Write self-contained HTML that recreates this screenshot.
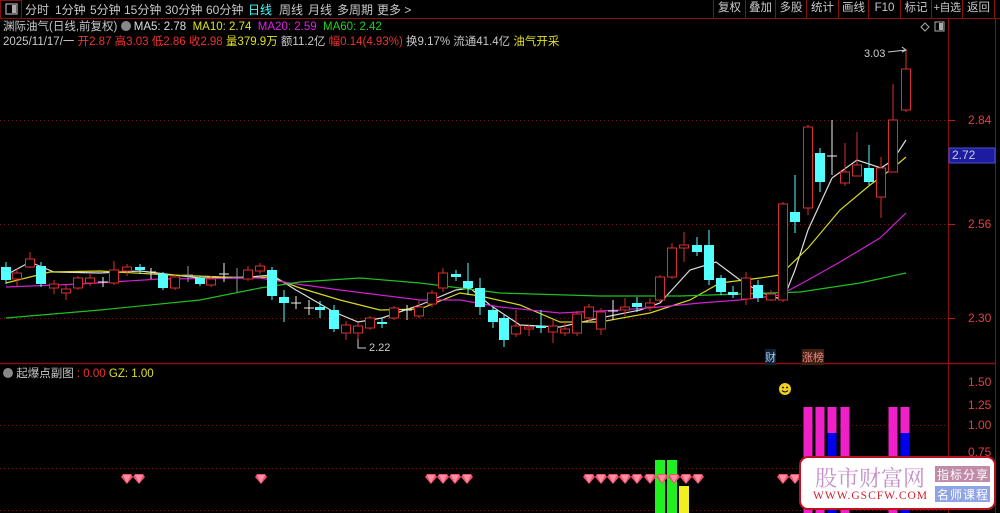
<!DOCTYPE html>
<html><head><meta charset="utf-8"><style>
*{margin:0;padding:0;box-sizing:border-box}
body{width:1000px;height:513px;background:#000;overflow:hidden;position:relative;font-family:"Liberation Sans","Noto Sans CJK SC",sans-serif;font-size:12px;color:#c8c8c8}
.a{position:absolute;white-space:nowrap}
.tb span{position:absolute;top:1px;font-size:12px;color:#c8c8c8}
.btn{position:absolute;top:0;height:18px;border-left:1px solid #8a1010;color:#c8c8c8;font-size:11.5px;line-height:17px;text-align:center;white-space:nowrap;overflow:hidden}
</style></head><body>
<svg class="a" style="left:0;top:0" width="1000" height="513" id="s">
<line x1="0" y1="18.5" x2="1000" y2="18.5" stroke="#8a1010"/>
<rect x="0.5" y="0.5" width="21" height="18" fill="none" stroke="#8a1010"/>
<rect x="6" y="4" width="11" height="10" fill="none" stroke="#aaa" stroke-width="1.2"/><rect x="12" y="5" width="4" height="8" fill="#aaa"/>
<line x1="948.5" y1="18" x2="948.5" y2="513" stroke="#8a1010"/>
<line x1="995.5" y1="18" x2="995.5" y2="513" stroke="#8a1010"/>
<line x1="0" y1="363.5" x2="995" y2="363.5" stroke="#8a1010" stroke-width="1.5"/>
<g stroke="#7a1515" stroke-dasharray="1,3">
<line x1="0" y1="120.5" x2="948" y2="120.5"/><line x1="0" y1="224.5" x2="948" y2="224.5"/><line x1="0" y1="318.5" x2="948" y2="318.5"/>
<line x1="0" y1="425.5" x2="948" y2="425.5"/><line x1="0" y1="468.5" x2="948" y2="468.5"/><line x1="0" y1="510.5" x2="948" y2="510.5"/>
</g>
<g stroke="#b02020"><line x1="948" y1="120.5" x2="955" y2="120.5"/><line x1="948" y1="224.5" x2="955" y2="224.5"/><line x1="948" y1="318.5" x2="955" y2="318.5"/></g>
<rect x="949" y="148" width="46" height="15" fill="#1c1ca0" stroke="#5050d0"/>
<path d="M921 27l4-4 4 4-4 4z" fill="none" stroke="#aaa"/>
<rect x="935" y="22" width="9" height="9" fill="none" stroke="#aaa"/><rect x="939" y="23" width="4" height="7" fill="#aaa"/>
<g id="ma" fill="none" stroke-width="1.2"></g>
<g id="cd"></g>
<g id="sub"></g>
<circle cx="785" cy="389" r="6" fill="#f0d020"/><circle cx="783" cy="387.5" r="0.9" fill="#000"/><circle cx="787" cy="387.5" r="0.9" fill="#000"/><path d="M782 390.5q3 3 6 0" stroke="#000" fill="none"/>
<path d="M888 52l18-2m-4-3l4 3-4 2" stroke="#ccc" fill="none"/>
<path d="M358 339v9h8" stroke="#ccc" fill="none"/>
<rect x="800" y="457" width="195" height="52" rx="8" fill="#fff" stroke="#c01020" stroke-width="2"/>
<rect x="935" y="466" width="55" height="16" fill="#c08aa8"/>
<rect x="935" y="486" width="55" height="16" fill="#8ea4e4"/>
</svg>
<div class="tb">
<span style="left:25px">分时</span><span style="left:55px">1分钟</span><span style="left:90px">5分钟</span><span style="left:124px">15分钟</span><span style="left:165px">30分钟</span><span style="left:206px">60分钟</span><span style="left:248px;color:#4ff">日线</span><span style="left:279px">周线</span><span style="left:308px">月线</span><span style="left:337px">多周期</span><span style="left:377px">更多 &gt;</span>
</div>
<div class="btn" style="left:713px;width:32px">复权</div><div class="btn" style="left:745px;width:30px">叠加</div><div class="btn" style="left:775px;width:31px">多股</div><div class="btn" style="left:806px;width:32px">统计</div><div class="btn" style="left:838px;width:30px">画线</div><div class="btn" style="left:868px;width:32px">F10</div><div class="btn" style="left:900px;width:31px">标记</div><div class="btn" style="left:931px;width:31px;font-size:11px;letter-spacing:-0.5px">+自选</div><div class="btn" style="left:962px;width:33px;border-right:1px solid #8a1010">返回</div>
<div class="a" style="left:3px;top:18px;font-size:11.5px">渊际油气(日线,前复权) <span style="display:inline-block;width:10px;height:10px;border-radius:5px;background:#888;vertical-align:-1px"></span> <span style="color:#ddd">MA5: 2.78</span>&nbsp; <span style="color:#e0e020">MA10: 2.74</span>&nbsp; <span style="color:#e020e0">MA20: 2.59</span>&nbsp; <span style="color:#20d020">MA60: 2.42</span></div>
<div class="a" style="left:3px;top:33px;font-size:11.5px">2025/11/17/一 <span style="color:#f03030">开2.87 高3.03 低2.86 收2.98</span> <span style="color:#e0e020">量379.9万</span> 额11.2亿 <span style="color:#f03030">幅0.14(4.93%)</span> 换9.17% 流通41.4亿 <span style="color:#e0e020">油气开采</span></div>
<div class="a" style="left:864px;top:48px;font-size:11px;color:#ccc">3.03</div>
<div class="a" style="left:369px;top:342px;font-size:11px;color:#ccc">2.22</div>
<div class="a" style="left:968px;top:113px;font-size:12px;color:#e04040">2.84</div>
<div class="a" style="left:968px;top:217px;font-size:12px;color:#e04040">2.56</div>
<div class="a" style="left:968px;top:311px;font-size:12px;color:#e04040">2.30</div>
<div class="a" style="left:952px;top:148px;font-size:12px;color:#ccd">2.72</div>
<div class="a" style="left:968px;top:375px;font-size:12px;color:#e04040">1.50</div>
<div class="a" style="left:968px;top:398px;font-size:12px;color:#e04040">1.25</div>
<div class="a" style="left:968px;top:418px;font-size:12px;color:#e04040">1.00</div>
<div class="a" style="left:968px;top:445px;font-size:12px;color:#e04040">0.75</div>
<div class="a" style="left:765px;top:349px;font-size:11px;color:#9cf;background:#123">财</div>
<div class="a" style="left:802px;top:349px;font-size:11px;color:#e88;background:#402010">涨榜</div>
<div class="a" style="left:3px;top:365px;font-size:11.5px"><span style="display:inline-block;width:10px;height:10px;border-radius:5px;background:#888;vertical-align:-1px"></span> 起爆点副图 <span style="color:#f03030">: 0.00</span> <span style="color:#e0e020">GZ: 1.00</span></div>
<div class="a" style="left:815px;top:462px;font-size:22px;color:#c490c8;font-family:'Noto Serif CJK SC',serif">股市财富网</div>
<div class="a" style="left:813px;top:490px;font-size:11.5px;color:#d02030;font-family:'Liberation Serif',serif;letter-spacing:1px">WWW.GSCFW.COM</div>
<div class="a" style="left:937px;top:466px;font-size:12px;color:#fff;letter-spacing:1px">指标分享</div>
<div class="a" style="left:937px;top:486px;font-size:12px;color:#fff;letter-spacing:1px">名师课程</div>
<script>
var C=[[6,'c',267,280,262,284],[17,'r',273,279,268,286],[30,'r',259,267,252,268],[41,'c',266,284,262,287],[54,'r',284,288,280,294],[66,'r',289,293,285,300],[78,'r',278,288,276,290],[90,'r',278,283,274,286],[103,'x',282,282,277,287],[114,'r',270,283,261,285],[127,'r',267,271,264,276],[140,'c',267,270,264,274],[151,'x',272,272,268,279],[163,'c',274,288,272,290],[175,'r',277,288,275,290],[188,'g',275,275,266,282],[200,'c',278,284,276,286],[211,'r',279,285,276,287],[224,'x',274,274,263,282],[237,'g',277,277,268,292],[248,'r',270,279,266,281],[260,'r',266,271,263,274],[272,'c',270,296,267,300],[284,'c',297,303,290,322],[296,'x',303,303,296,309],[309,'x',308,308,300,315],[320,'c',307,310,301,318],[334,'c',310,329,305,332],[346,'r',325,333,321,340],[358,'r',326,333,323,345],[370,'r',318,328,316,330],[382,'c',322,324,318,328],[394,'r',308,318,306,320],[407,'x',310,310,305,320],[419,'r',307,316,300,318],[432,'r',293,304,290,307],[443,'r',273,288,268,292],[456,'c',274,277,270,281],[468,'c',281,288,263,295],[480,'c',288,307,278,315],[493,'c',310,322,307,328],[504,'c',318,340,315,347],[516,'r',326,334,310,337],[529,'r',327,329,325,336],[541,'c',326,328,310,333],[553,'r',326,332,320,343],[565,'r',329,333,322,336],[577,'r',314,333,311,336],[589,'r',307,318,304,322],[601,'r',312,329,308,335],[613,'x',311,311,300,320],[625,'r',307,310,298,316],[637,'c',303,307,297,312],[650,'r',303,307,298,311],[660,'r',277,300,275,302],[672,'r',248,277,243,279],[684,'r',245,248,232,262],[697,'c',245,252,237,256],[709,'c',245,280,230,285],[721,'c',278,292,275,295],[733,'c',292,295,286,298],[746,'r',278,299,272,305],[758,'c',285,298,280,302],[771,'r',294,300,290,301],[783,'r',204,300,202,302],[795,'c',212,222,175,233],[808,'r',127,208,125,215],[820,'c',153,182,148,192],[832,'w',156,156,120,175],[845,'r',172,183,143,186],[857,'r',165,176,132,176],[869,'c',168,182,145,185],[881,'r',168,197,157,218],[893,'r',120,172,84,172],[906,'r',69,110,50,112]];
var h='';C.forEach(function(d){var x=d[0],t=d[1],o=d[2],c=d[3],hi=d[4],lo=d[5];
if(t=='r'){h+='<line x1="'+x+'" y1="'+hi+'" x2="'+x+'" y2="'+o+'" stroke="#d83030"/><line x1="'+x+'" y1="'+c+'" x2="'+x+'" y2="'+lo+'" stroke="#d83030"/><rect x="'+(x-4.5)+'" y="'+o+'" width="9" height="'+Math.max(c-o,1)+'" fill="#000" stroke="#d83030"/>';}
else if(t=='c'){h+='<line x1="'+x+'" y1="'+hi+'" x2="'+x+'" y2="'+lo+'" stroke="#54ffff"/><rect x="'+(x-5)+'" y="'+o+'" width="10" height="'+Math.max(c-o,2)+'" fill="#54ffff"/>';}
else{var col=t=='g'?'#999':'#eee';h+='<line x1="'+x+'" y1="'+hi+'" x2="'+x+'" y2="'+lo+'" stroke="'+col+'"/><line x1="'+(x-5)+'" y1="'+o+'" x2="'+(x+5)+'" y2="'+o+'" stroke="'+col+'"/>';}});
document.getElementById('cd').innerHTML=h;
var M=[['#ddd','6,275 30,262 54,272 100,273 140,271 200,278 250,277 272,275 296,290 334,312 358,322 382,318 420,305 456,290 470,288 490,305 520,325 560,327 600,318 640,310 660,303 690,270 716,262 740,280 760,292 783,300 795,270 808,230 832,178 857,160 881,168 893,160 906,140'],['#d8d820','6,283 50,272 100,271 170,275 250,278 270,277 300,288 340,300 380,310 420,309 460,293 480,296 520,305 560,322 600,322 650,313 690,300 720,283 760,278 780,275 808,248 840,210 870,185 893,168 906,157'],['#d020d0','6,287 80,284 160,279 260,278 290,283 340,290 380,295 420,300 460,300 500,307 560,313 620,310 660,307 700,303 740,300 780,295 808,280 840,262 880,238 906,213'],['#20c020','6,318 100,310 200,300 260,288 300,282 360,278 420,283 500,293 600,296 680,296 740,294 800,292 860,283 906,273']];
var m='';M.forEach(function(a){m+='<polyline points="'+a[1]+'" stroke="'+a[0]+'"/>';});document.getElementById('ma').innerHTML=m;
var s='';[[660,460,'#20f020'],[672,460,'#20f020'],[684,486,'#f0f020']].forEach(function(b){s+='<rect x="'+(b[0]-5)+'" y="'+b[1]+'" width="10" height="'+(513-b[1])+'" fill="'+b[2]+'"/>';});
[808,820,832,845,893,905].forEach(function(x){s+='<rect x="'+(x-4.5)+'" y="407" width="9" height="106" fill="#f020c8"/>';if(x==832||x==905)s+='<rect x="'+(x-4.5)+'" y="433" width="9" height="80" fill="#0000f0"/>';});
[127,139,261,431,443,455,467,589,601,613,625,637,650,662,674,686,698,783,795].forEach(function(x){s+='<path d="M'+(x-6)+' 477l2-3h8l2 3-6 7z" fill="#f05070"/><path d="M'+(x-4)+' 475h8l-4 8z" fill="#ff90a0"/>';});
document.getElementById('sub').innerHTML=s;
</script>
</body></html>
